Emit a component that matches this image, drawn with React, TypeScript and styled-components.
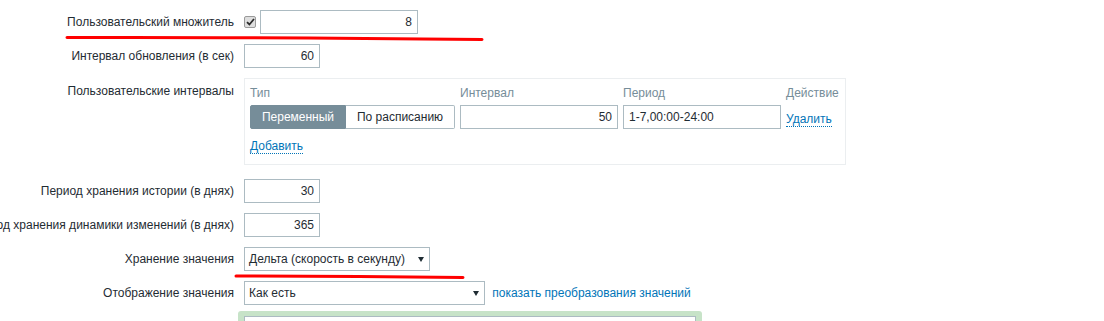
import React from "react";
import styled, { createGlobalStyle } from "styled-components";

const GlobalStyle = createGlobalStyle`
  body {
    margin: 0;
    background: #fff;
    font-family: "Liberation Sans", Arial, sans-serif;
    font-size: 12px;
    color: #1f2c33;
  }
`;

const Page = styled.div`
  position: relative;
  height: 321px;
  overflow: hidden;
  padding-top: 10px;
  box-sizing: border-box;
`;

const Form = styled.ul`
  list-style: none;
  margin: 0;
  padding: 0;
`;

const Row = styled.li<{ $gap?: number }>`
  display: grid;
  grid-template-columns: 234px 1fr;
  column-gap: 10px;
  margin-bottom: ${(p) => p.$gap ?? 10}px;
`;

const Label = styled.div<{ $top?: boolean }>`
  display: flex;
  justify-content: flex-end;
  align-items: ${(p) => (p.$top ? "flex-start" : "center")};
  padding-top: ${(p) => (p.$top ? 6 : 0)}px;
  white-space: nowrap;
  line-height: 14px;
`;

const Controls = styled.div`
  display: flex;
  align-items: center;
  gap: 4px;
`;

const TextBox = styled.input<{ $width: number; $align?: "left" | "right" }>`
  box-sizing: border-box;
  width: ${(p) => p.$width}px;
  height: 24px;
  margin: 0;
  padding: 0 5px;
  border: 1px solid #acbbc2;
  background: #fff;
  font: inherit;
  color: #1f2c33;
  text-align: ${(p) => p.$align ?? "right"};
  outline: none;
`;

const Check = styled.span`
  box-sizing: border-box;
  width: 12px;
  height: 12px;
  border: 1px solid #9a9a9a;
  border-radius: 2px;
  background: #dedede;
  display: flex;
  align-items: center;
  justify-content: center;
`;

const IntervalBox = styled.div`
  box-sizing: border-box;
  width: 602px;
  border: 1px solid #ebeef0;
  padding: 7px 5px 11px;
`;

const IntervalGrid = styled.div`
  display: grid;
  grid-template-columns: 205px 158px 158px 1fr;
  column-gap: 5px;
  row-gap: 5px;
  align-items: center;
`;

const Head = styled.div`
  color: #768d99;
  line-height: 14px;
  white-space: nowrap;
`;

const Segmented = styled.div`
  display: flex;
  height: 24px;
`;

const SegButton = styled.span<{ $active?: boolean; $width: number }>`
  box-sizing: border-box;
  width: ${(p) => p.$width}px;
  display: flex;
  align-items: center;
  justify-content: center;
  white-space: nowrap;
  border: 1px solid ${(p) => (p.$active ? "#768d99" : "#acbbc2")};
  background: ${(p) => (p.$active ? "#768d99" : "#fff")};
  color: ${(p) => (p.$active ? "#fff" : "#1f2c33")};
  border-radius: ${(p) => (p.$active ? "2px 0 0 2px" : "0 2px 2px 0")};
  ${(p) => (p.$active ? "" : "border-left: none;")}
`;

const Link = styled.a<{ $dotted?: boolean }>`
  color: #0275b8;
  text-decoration: none;
  line-height: 14px;
  white-space: nowrap;
  cursor: pointer;
  border-bottom: ${(p) => (p.$dotted ? "1px dotted #0275b8" : "none")};
`;

const ActionCell = styled.div`
  padding-top: 4px;
`;

const AddRow = styled.div`
  margin-top: 10px;
`;

const Select = styled.div<{ $width: number }>`
  box-sizing: border-box;
  width: ${(p) => p.$width}px;
  height: 24px;
  border: 1px solid #acbbc2;
  display: flex;
  align-items: center;
  justify-content: space-between;
  padding: 0 5px 0 4px;
  background: #fff;
  white-space: nowrap;
`;

const Highlight = styled.div`
  box-sizing: border-box;
  width: 464px;
  margin: -4px 0 0 -6px;
  padding: 5px 6px;
  background: #c7e3c8;
  border-radius: 3px;
`;

const InnerBox = styled.div`
  height: 40px;
  background: #fff;
  border: 1px solid #acbbc2;
`;

// hand-drawn red annotation strokes over the form
const Marks = styled.svg`
  position: absolute;
  left: 0;
  top: 0;
  pointer-events: none;
`;

const Arrow = () => (
  <svg width="6" height="5" viewBox="0 0 6 5">
    <path d="M0 0H6L3 5Z" fill="#1f2c33" />
  </svg>
);

const App = () => {
  return (
    <Page>
      <GlobalStyle />
      <Form>
        <Row>
          <Label>Пользовательский множитель</Label>
          <Controls>
            <Check>
              <svg width="9" height="8" viewBox="0 0 9 8">
                <path d="M1 4.2L3.4 6.5L8 1" stroke="#2b2b2b" strokeWidth="1.8" fill="none" />
              </svg>
            </Check>
            <TextBox $width={158} value="8" readOnly />
          </Controls>
        </Row>
        <Row>
          <Label>Интервал обновления (в сек)</Label>
          <Controls>
            <TextBox $width={76} value="60" readOnly />
          </Controls>
        </Row>
        <Row $gap={14}>
          <Label $top>Пользовательские интервалы</Label>
          <IntervalBox>
            <IntervalGrid>
              <Head>Тип</Head>
              <Head>Интервал</Head>
              <Head>Период</Head>
              <Head>Действие</Head>
              <Segmented>
                <SegButton $active $width={96}>Переменный</SegButton>
                <SegButton $width={109}>По расписанию</SegButton>
              </Segmented>
              <TextBox $width={158} value="50" readOnly />
              <TextBox $width={158} $align="left" value="1-7,00:00-24:00" readOnly />
              <ActionCell>
                <Link $dotted>Удалить</Link>
              </ActionCell>
            </IntervalGrid>
            <AddRow>
              <Link $dotted>Добавить</Link>
            </AddRow>
          </IntervalBox>
        </Row>
        <Row>
          <Label>Период хранения истории (в днях)</Label>
          <Controls>
            <TextBox $width={76} value="30" readOnly />
          </Controls>
        </Row>
        <Row>
          <Label>Период хранения динамики изменений (в днях)</Label>
          <Controls>
            <TextBox $width={76} value="365" readOnly />
          </Controls>
        </Row>
        <Row>
          <Label>Хранение значения</Label>
          <Controls>
            <Select $width={186}>
              Дельта (скорость в секунду)
              <Arrow />
            </Select>
          </Controls>
        </Row>
        <Row>
          <Label>Отображение значения</Label>
          <Controls>
            <Select $width={241}>
              Как есть
              <Arrow />
            </Select>
            <Link>&nbsp;показать преобразования значений</Link>
          </Controls>
        </Row>
        <Row>
          <div />
          <Highlight>
            <InnerBox />
          </Highlight>
        </Row>
      </Form>
      <Marks width="1104" height="321">
        <path d="M67 37.5 Q 250 37 482 39.5" stroke="#ff0000" strokeWidth="3" fill="none" strokeLinecap="round" />
        <path d="M236 276 Q 350 276 463 277.5" stroke="#ff0000" strokeWidth="3" fill="none" strokeLinecap="round" />
      </Marks>
    </Page>
  );
};

export default App;
